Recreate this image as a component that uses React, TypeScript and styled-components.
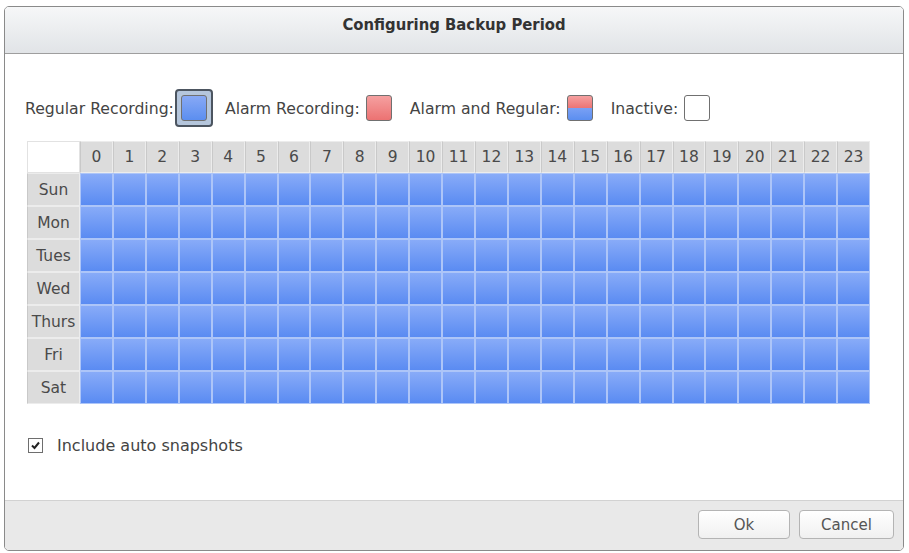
import { Fragment } from 'react';
import styled, { createGlobalStyle } from 'styled-components';

const GlobalStyle = createGlobalStyle`
  body {
    margin: 0;
    background: #ffffff;
    font-family: 'DejaVu Sans', Verdana, sans-serif;
  }
`;

const days = ['Sun', 'Mon', 'Tues', 'Wed', 'Thurs', 'Fri', 'Sat'];
const hours = Array.from({ length: 24 }, (_, i) => i);

const Dialog = styled.div`
  margin: 6px 0 0 4px;
  width: 900px;
  height: 545px;
  box-sizing: border-box;
  border: 1px solid #8a8a8a;
  border-radius: 5px;
  display: flex;
  flex-direction: column;
  overflow: hidden;
  background: #ffffff;
`;

const Header = styled.div`
  height: 47px;
  flex: none;
  display: flex;
  align-items: center;
  justify-content: center;
  background: linear-gradient(#f6f7f8, #e1e4e7);
  border-bottom: 1px solid #9e9e9e;
  box-sizing: border-box;
  padding-bottom: 12px;
`;

const Title = styled.div`
  font-family: 'DejaVu Sans Condensed', 'DejaVu Sans', sans-serif;
  font-weight: 700;
  font-size: 16.5px;
  color: #333;
`;

const Body = styled.div`
  flex: 1;
  padding: 35px 0 0 20px;
`;

const Legend = styled.div`
  display: flex;
  align-items: center;
  height: 38px;
  font-size: 15.7px;
  color: #444;
`;

const LegendItem = styled.div<{ $gap?: number }>`
  display: flex;
  align-items: center;
  margin-right: ${(p) => p.$gap ?? 18}px;
`;

const Label = styled.span`
  margin-right: 6px;
`;

const Selected = styled.div`
  border: 2px solid #4c5560;
  border-radius: 4px;
  background: #b5c6dc;
  padding: 4px 4px;
  margin-left: 1px;
`;

const Swatch = styled.div<{ $kind: 'regular' | 'alarm' | 'both' | 'off' }>`
  width: 24px;
  height: 24px;
  border: 1px solid #707070;
  border-radius: 3px;
  background: ${(p) =>
    p.$kind === 'regular'
      ? 'linear-gradient(#88a9f5, #5b8ef0)'
      : p.$kind === 'alarm'
      ? 'linear-gradient(#f5a0a0, #ec7272)'
      : p.$kind === 'both'
      ? 'linear-gradient(#f5a0a0, #ec7474 50%, #7aa0f4 50%, #5b8ef0)'
      : '#ffffff'};
`;

const Grid = styled.div`
  margin: 14px 0 0 2px;
  width: 843px;
  display: grid;
  grid-template-columns: 53px repeat(24, 1fr);
  grid-template-rows: 32px repeat(7, 33px);
  font-size: 15.5px;
  color: #4a4a4a;
`;

const Corner = styled.div`
  background: #ffffff;
  border: 1px solid #e2e2e2;
`;

const HeadCell = styled.div`
  background: #dcdcdc;
  border: 1px solid #ececec;
  border-left-color: #c9c9c9;
  display: flex;
  align-items: center;
  justify-content: center;
`;

const Slot = styled.div`
  background: linear-gradient(#88abf8, #5a8bf2);
  border: 1px solid #adc5f8;
`;

const CheckRow = styled.label`
  display: flex;
  align-items: center;
  gap: 14px;
  margin: 32px 0 0 3px;
  font-size: 16px;
  color: #444;
`;

const Box = styled.span`
  width: 15px;
  height: 15px;
  box-sizing: border-box;
  border: 1px solid #6e6e6e;
  background: #ffffff;
  display: flex;
  align-items: center;
  justify-content: center;
`;

const Footer = styled.div`
  height: 50px;
  flex: none;
  box-sizing: border-box;
  background: #e9e9e9;
  border-top: 1px solid #d2d2d2;
  display: flex;
  align-items: center;
  justify-content: flex-end;
  gap: 9px;
  padding: 0 9px 2px 0;
`;

const Button = styled.button<{ $w: number }>`
  width: ${(p) => p.$w}px;
  height: 29px;
  border: 1px solid #b4b4b4;
  border-radius: 4px;
  background: linear-gradient(#ffffff, #f0f0f0);
  font-family: 'DejaVu Sans', sans-serif;
  font-size: 15px;
  color: #555;
`;

function App() {
  return (
    <>
      <GlobalStyle />
      <Dialog>
        <Header>
          <Title>Configuring Backup Period</Title>
        </Header>
        <Body>
          <Legend>
            <LegendItem $gap={12}>
              <span>Regular Recording:</span>
              <Selected>
                <Swatch $kind="regular" />
              </Selected>
            </LegendItem>
            <LegendItem>
              <Label>Alarm Recording:</Label>
              <Swatch $kind="alarm" />
            </LegendItem>
            <LegendItem>
              <Label>Alarm and Regular:</Label>
              <Swatch $kind="both" />
            </LegendItem>
            <LegendItem>
              <Label>Inactive:</Label>
              <Swatch $kind="off" />
            </LegendItem>
          </Legend>
          <Grid>
            <Corner />
            {hours.map((h) => (
              <HeadCell key={h}>{h}</HeadCell>
            ))}
            {days.map((d) => (
              <Fragment key={d}>
                <HeadCell>{d}</HeadCell>
                {hours.map((h) => (
                  <Slot key={h} />
                ))}
              </Fragment>
            ))}
          </Grid>
          <CheckRow>
            <Box>
              <svg width="11" height="11" viewBox="0 0 11 11">
                <path d="M2 5.5 L4.5 8 L9 2.5" fill="none" stroke="#222" strokeWidth="2" />
              </svg>
            </Box>
            Include auto snapshots
          </CheckRow>
        </Body>
        <Footer>
          <Button $w={92}>Ok</Button>
          <Button $w={95}>Cancel</Button>
        </Footer>
      </Dialog>
    </>
  );
}

export default App;
